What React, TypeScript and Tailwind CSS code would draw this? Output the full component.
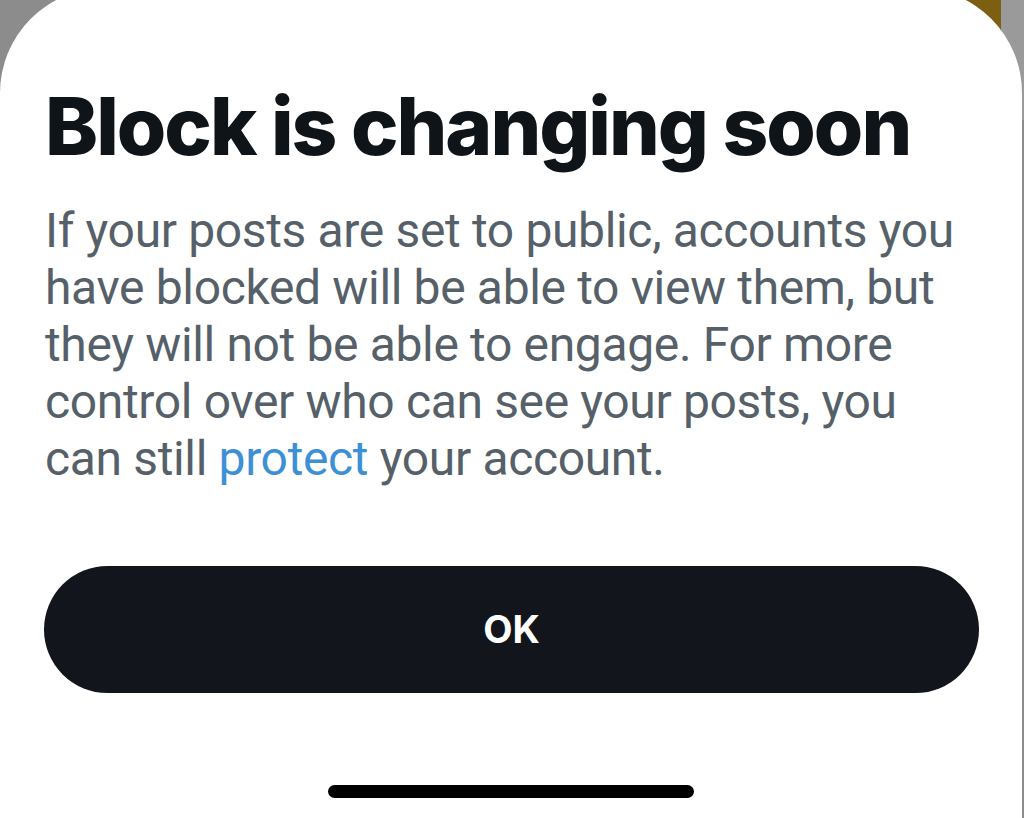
export default function App() {
  return (
    <div className="relative h-[818px] w-[1024px] overflow-hidden bg-[#8c8c8c] font-['Inter',sans-serif]">
      {/* strip of the app behind the sheet */}
      <div className="absolute left-[959px] top-0 h-[40px] w-[42px] bg-[#7d5f14]" />
      <div className="absolute right-0 top-0 h-[120px] w-[23px] bg-[#9a9a9a]" />

      <div className="relative mr-[2px] -mt-3 flex h-[830px] flex-col rounded-t-[105px] bg-white px-[45px] pt-[98px]">
        <h1 className="shrink-0 whitespace-nowrap text-[80px] font-extrabold leading-[80px] tracking-[-2px] text-[#0f1419]">
          Block is changing soon
        </h1>
        <p className="mt-[36px] shrink-0 whitespace-nowrap font-['Roboto',sans-serif] text-[48px] leading-[57px] tracking-[-0.35px] text-[#566069]">
          If your posts are set to public, accounts you
          <br />
          have blocked will be able to view them, but
          <br />
          they will not be able to engage. For more
          <br />
          control over who can see your posts, you
          <br />
          can still <span className="text-[#3d8fd6]">protect</span> your account.
        </p>
        <button
          type="button"
          className="mt-[79px] -ml-px flex h-[127px] w-[935px] shrink-0 items-center justify-center rounded-full bg-[#12151b] text-[38px] font-bold text-white"
        >
          OK
        </button>
        <div className="mt-[92px] flex shrink-0 justify-center">
          <div className="h-[13px] w-[366px] rounded-full bg-black" />
        </div>
      </div>
    </div>
  );
}
